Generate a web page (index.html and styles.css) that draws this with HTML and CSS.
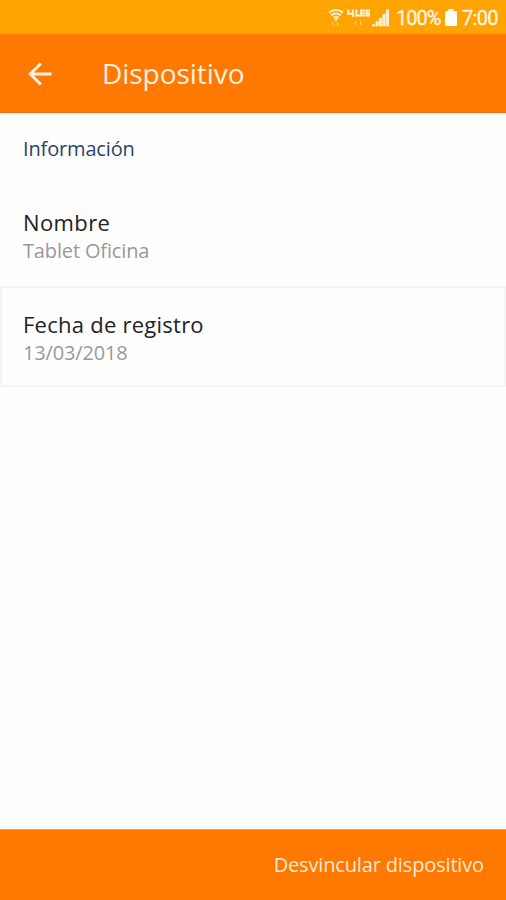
FILE: index.html
```html
<!DOCTYPE html>
<html lang="es">
<head>
<meta charset="utf-8">
<title>Dispositivo</title>
<link rel="stylesheet" href="styles.css">
</head>
<body>
<div class="screen">
  <div class="status">
    <svg class="wifi" width="16" height="20" viewBox="0 0 16 20" fill="none" stroke="#fff0d8">
      <path d="M1 3.6Q8 -1.4 15 3.6M3.2 6.2Q8 2.6 12.8 6.2M5.4 8.8Q8 7 10.6 8.8" stroke-width="2"/>
      <path d="M6 9.5h4L8 12.5z" fill="#fff0d8" stroke="none"/>
      <path d="M5 13v3.5M3.8 14.5L5 13M9.5 13v3.5M9.5 16.5l1.3-1.5" stroke="#ffd080"/>
    </svg>
    <svg class="lte" width="23" height="20" viewBox="0 0 23 20" fill="none" stroke="#fff0d8" stroke-width="2.1">
      <path d="M1.2 .5v4.3h6M6 .5v7.5M9.3 .5v6h4.2M18 1.5h-4v5h4M14 4h3.5M23 1.5h-3.5v5h3V4.2h-2"/>
      <path d="M8.5 12v4M7.3 13.5l1.2-1.5M13.5 12v4M13.5 16l1.3-1.5" stroke="#ffd080" stroke-width="1"/>
    </svg>
    <svg class="signal" width="18" height="18" viewBox="0 0 18 18" fill="#fff0d8">
      <path d="M0 17.2L17 0v17.2z" fill-opacity=".3"/>
      <path d="M0 15.2h3v2H0zM3.6 12.2h2.9v5H3.6zM7 9h3v8.2H7zM10.5 5h3v12.2h-3zM14.1 .5H17v16.7h-2.9z"/>
    </svg>
    <span class="percent">100%</span>
    <svg class="battery" width="12" height="18" viewBox="0 0 12 18" fill="#fff">
      <path d="M3.5 0h5v2H11q1 0 1 1v13q0 1-1 1H1q-1 0-1-1V3q0-1 1-1h2.5z"/>
    </svg>
    <span class="clock">7:00</span>
  </div>
  <header class="bar">
    <svg class="back" width="24" height="24" viewBox="0 0 24 24" fill="none" stroke="#fff0e4" stroke-width="3">
      <path d="M23.5 12H2.5M12.8 1.5L2.3 12l10.5 10.5"/>
    </svg>
    <h1 class="title">Dispositivo</h1>
  </header>
  <main class="content">
    <h2 class="section">Información</h2>
    <div class="item">
      <div class="label name">Nombre</div>
      <div class="value">Tablet Oficina</div>
    </div>
    <div class="item boxed">
      <div class="label">Fecha de registro</div>
      <div class="value">13/03/2018</div>
    </div>
  </main>
  <footer class="footer">Desvincular dispositivo</footer>
</div>
</body>
</html>
```
FILE: styles.css
```css
* { box-sizing: border-box; }
body { margin: 0; background: #fff; font-family: "Open Sans", sans-serif; }
.screen { width: 506px; height: 900px; display: flex; flex-direction: column; background: #fefefe; overflow: hidden; }
.status { height: 34px; flex: none; background: #ffa400; display: flex; align-items: flex-start; padding: 9px 8px 0 0; justify-content: flex-end; color: #fff6e8; font: 20px/20px Roboto, sans-serif; }
.wifi { margin-right: 3px; }
.lte { margin-right: 2px; }
.signal { margin-right: 6px; }
.percent { width: 44px; margin-right: 5px; letter-spacing: -1px; }
.battery { margin-right: 5px; }
.clock { width: 36px; letter-spacing: -0.7px; }
.percent, .clock { margin-top: -1px; white-space: nowrap; -webkit-text-stroke: 0.3px #fff6e8; }
.bar { height: 79px; flex: none; background: #ff7800; border-bottom: 1px solid #f66b10; display: flex; align-items: center; padding-left: 28px; }
.back { margin-top: 2px; }
.title { margin: 0 0 0 50px; font-size: 28px; line-height: 38px; font-weight: 400; letter-spacing: -0.05px; color: #fff0e4; }
.content { flex: 1; }
.section { margin: 0; height: 72px; padding: 22px 23px 0; font-size: 20px; line-height: 28px; font-weight: 400; letter-spacing: -0.15px; color: #2b4468; }
.item { height: 101px; padding: 21px 22px 0; border: 1px solid transparent; }
.boxed { border: 2px solid #f4f4f4; padding: 21px 21px 0; }
.label { font-size: 22px; line-height: 30px; letter-spacing: 0.25px; color: #222; }
.name { letter-spacing: 0.4px; }
.value { font-size: 20px; line-height: 27px; letter-spacing: -0.15px; color: #999; }
.footer { height: 71px; flex: none; background: #ff7800; border-top: 1px solid #ff9550; padding: 21px 22px 0; text-align: right; font-size: 20px; line-height: 28px; letter-spacing: -0.15px; color: #ffe8d4; }
```
